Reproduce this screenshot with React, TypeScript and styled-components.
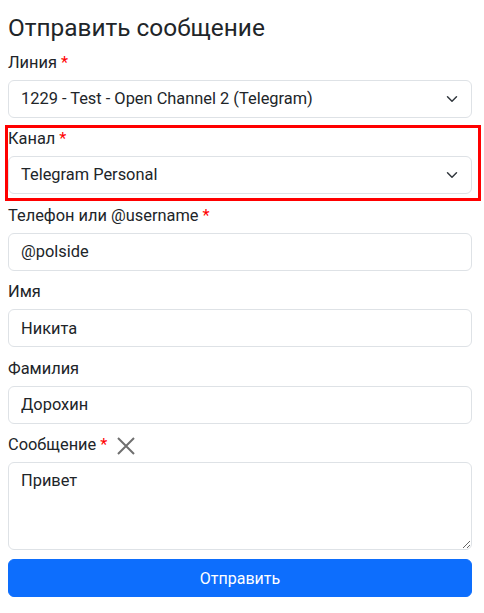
import React, { useState } from 'react';
import styled, { createGlobalStyle } from 'styled-components';

const GlobalStyle = createGlobalStyle`
  body {
    margin: 0;
    background: #ffffff;
    color: #212529;
    font-family: Roboto, 'Liberation Sans', sans-serif;
    font-size: 16px;
    line-height: 1.5;
  }
  * {
    box-sizing: border-box;
  }
`;

const chevron =
  "url(\"data:image/svg+xml,%3csvg xmlns='http://www.w3.org/2000/svg' viewBox='0 0 16 16'%3e%3cpath fill='none' stroke='%23343a40' stroke-linecap='round' stroke-linejoin='round' stroke-width='2' d='m2 5 6 6 6-6'/%3e%3c/svg%3e\")";

const Page = styled.form`
  width: 472px;
  padding: 13px 0 0 8px;
`;

const Title = styled.h4`
  margin: 0 0 9px 0;
  font-size: 24.4px;
  font-weight: 400;
  line-height: 29px;
`;

const Group = styled.div<{ $highlight?: boolean; $last?: boolean }>`
  position: relative;
  margin-bottom: ${(p) => (p.$last ? '9px' : '10px')};

  ${(p) =>
    p.$highlight &&
    `
    &::after {
      content: '';
      position: absolute;
      top: -3px;
      bottom: -7px;
      left: -3px;
      right: -9px;
      border: 3px solid #ff0000;
      pointer-events: none;
    }
  `}
`;

const Label = styled.label`
  display: flex;
  align-items: center;
  gap: 4px;
  margin-bottom: 4.5px;
  height: 24px;
  font-size: 16.4px;
`;

const Required = styled.span`
  color: #ff0000;
`;

const ClearButton = styled.button`
  display: inline-flex;
  align-items: center;
  padding: 0;
  margin-left: 6px;
  border: none;
  background: transparent;
  color: #6f6f6f;
  cursor: pointer;
`;

const baseControl = `
  display: block;
  width: 100%;
  padding: 6px 12px;
  font-family: Roboto, 'Liberation Sans', sans-serif;
  font-size: 16.4px;
  line-height: 24px;
  color: #212529;
  background-color: #ffffff;
  border: 1px solid #dee2e6;
  border-radius: 6px;
  outline: none;
`;

const Select = styled.select`
  ${baseControl}
  height: 38px;
  appearance: none;
  padding-right: 36px;
  background-image: ${chevron};
  background-repeat: no-repeat;
  background-position: right 12px center;
  background-size: 14px 12px;
`;

const Input = styled.input`
  ${baseControl}
  height: 38px;
`;

const TextArea = styled.textarea`
  ${baseControl}
  height: 88px;
  resize: vertical;
`;

const Submit = styled.button`
  display: block;
  width: 100%;
  height: 38px;
  margin: 0;
  border: 1px solid #0d6efd;
  border-radius: 6px;
  background: #0d6efd;
  color: #ffffff;
  font-family: Roboto, 'Liberation Sans', sans-serif;
  font-size: 16px;
  cursor: pointer;
`;

const CrossIcon = () => (
  <svg width="18" height="18" viewBox="0 0 18 18" fill="none">
    <path d="M1 1L17 17M17 1L1 17" stroke="currentColor" strokeWidth="2" />
  </svg>
);

export default function App() {
  const [message, setMessage] = useState('Привет');

  return (
    <>
      <GlobalStyle />
      <Page onSubmit={(e) => e.preventDefault()}>
        <Title>Отправить сообщение</Title>

        <Group>
          <Label>
            Линия <Required>*</Required>
          </Label>
          <Select defaultValue="1229">
            <option value="1229">1229 - Test - Open Channel 2 (Telegram)</option>
          </Select>
        </Group>

        <Group $highlight>
          <Label>
            Канал <Required>*</Required>
          </Label>
          <Select defaultValue="tg">
            <option value="tg">Telegram Personal</option>
          </Select>
        </Group>

        <Group>
          <Label>
            Телефон или @username <Required>*</Required>
          </Label>
          <Input defaultValue="@polside" />
        </Group>

        <Group>
          <Label>Имя</Label>
          <Input defaultValue="Никита" />
        </Group>

        <Group>
          <Label>Фамилия</Label>
          <Input defaultValue="Дорохин" />
        </Group>

        <Group $last>
          <Label>
            Сообщение <Required>*</Required>
            <ClearButton type="button" onClick={() => setMessage('')}>
              <CrossIcon />
            </ClearButton>
          </Label>
          <TextArea value={message} onChange={(e) => setMessage(e.target.value)} />
        </Group>

        <Submit type="submit">Отправить</Submit>
      </Page>
    </>
  );
}
